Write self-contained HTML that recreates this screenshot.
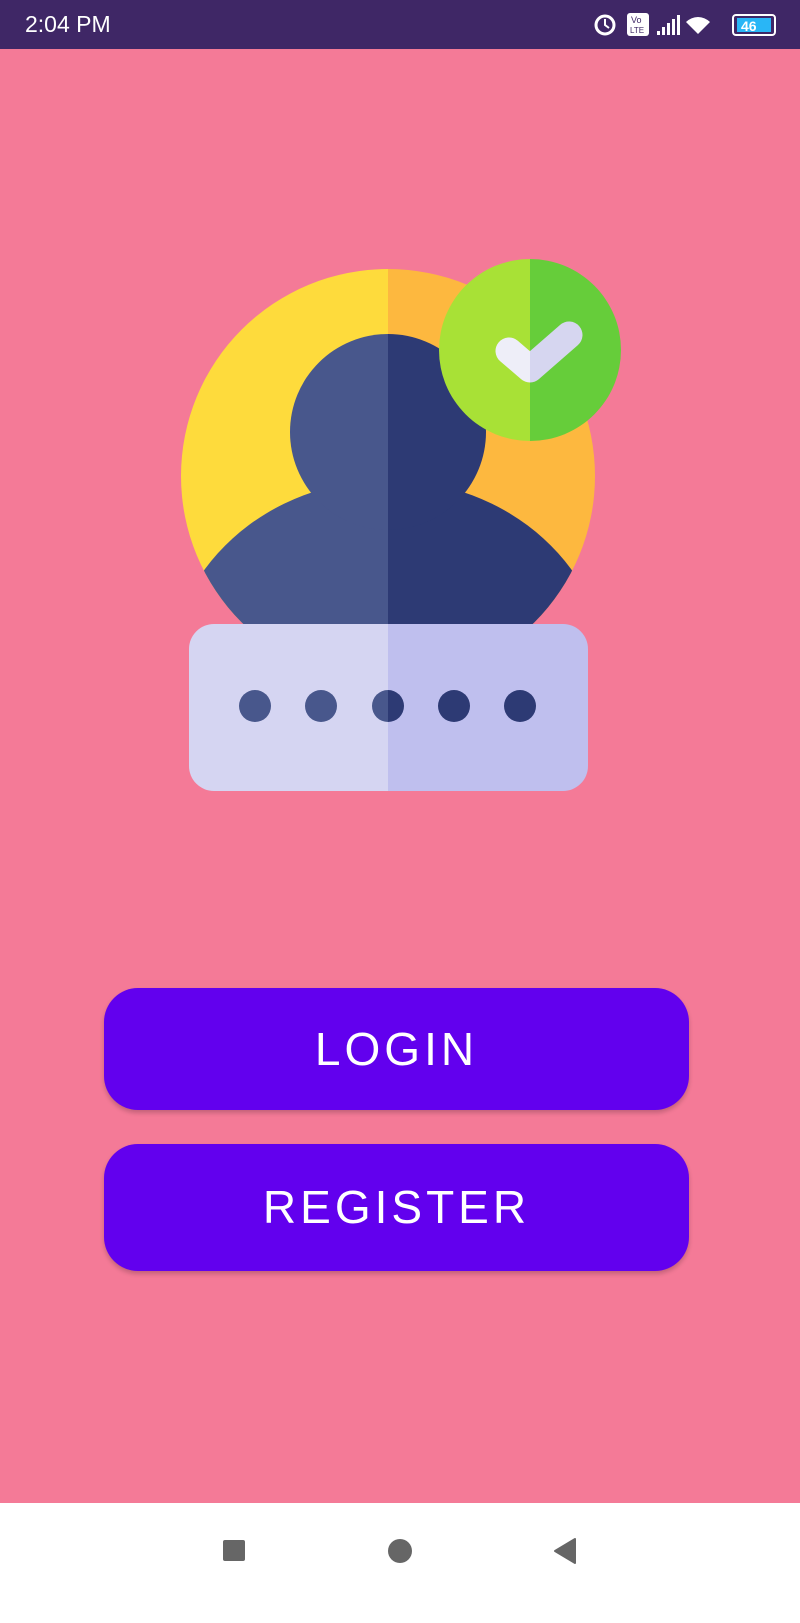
<!DOCTYPE html>
<html><head><meta charset="utf-8"><style>
html,body{margin:0;padding:0;}
body{width:800px;height:1600px;position:relative;background:#f47a97;overflow:hidden;font-family:"Liberation Sans",sans-serif;}
.sb{position:absolute;left:0;top:0;width:800px;height:49px;background:#3f2766;color:#fff;}
.sb .t{position:absolute;left:25px;top:11px;font-size:23px;}
.btn{position:absolute;left:104px;width:585px;background:#6200ee;border-radius:34px;color:#fff;text-align:center;font-size:46px;letter-spacing:4px;box-shadow:0 3px 5px rgba(0,0,0,0.2);}
.nav{position:absolute;left:0;top:1503px;width:800px;height:120px;background:#fff;}
</style></head><body>
<div class="sb"><span class="t">2:04 PM</span>
<svg width="800" height="49" style="position:absolute;left:0;top:0">
<circle cx="605" cy="25" r="9" fill="none" stroke="#fff" stroke-width="3"/><path d="M605 19v6l4 3" stroke="#fff" stroke-width="2" fill="none"/>
<rect x="627" y="13" width="22" height="23" rx="3" fill="#fff"/><text x="631" y="23" font-size="9" fill="#3f2766" font-family="Liberation Sans">Vo</text><text x="630" y="33" font-size="8" fill="#3f2766" font-family="Liberation Sans">LTE</text>
<path d="M657 35h3v-4h-3zM662 35h3v-8h-3zM667 35h3v-12h-3zM672 35h3v-16h-3zM677 35h3v-20h-3z" fill="#fff"/>
<path d="M698 34l-12-12a17 17 0 0 1 24 0z" fill="#fff"/>
<rect x="733" y="15" width="42" height="20" rx="3" fill="none" stroke="#fff" stroke-width="2"/><rect x="737" y="18" width="34" height="14" fill="#29b6f6"/><text x="741" y="31" font-size="14" font-weight="bold" fill="#fff" font-family="Liberation Sans">46</text>
</svg></div>

<svg width="800" height="1600" style="position:absolute;left:0;top:0">
<defs>
<clipPath id="big"><circle cx="388" cy="476" r="207"/></clipPath>
<clipPath id="L"><rect x="0" y="0" width="388" height="1600"/></clipPath>
<clipPath id="R"><rect x="388" y="0" width="412" height="1600"/></clipPath>
<clipPath id="GL"><rect x="0" y="0" width="530" height="1600"/></clipPath>
<clipPath id="GR"><rect x="530" y="0" width="270" height="1600"/></clipPath>
</defs>
<circle cx="388" cy="476" r="207" fill="#fedb3c" clip-path="url(#L)"/>
<circle cx="388" cy="476" r="207" fill="#fdb83f" clip-path="url(#R)"/>
<g clip-path="url(#big)">
<g clip-path="url(#L)"><ellipse cx="388" cy="680" rx="220" ry="200" fill="#48578c"/></g>
<g clip-path="url(#R)"><ellipse cx="388" cy="680" rx="220" ry="200" fill="#2d3a74"/></g>
</g>
<circle cx="388" cy="432" r="98" fill="#48578c" clip-path="url(#L)"/>
<circle cx="388" cy="432" r="98" fill="#2d3a74" clip-path="url(#R)"/>
<rect x="189" y="624" width="399" height="167" rx="25" fill="#d5d5f2" clip-path="url(#L)"/>
<rect x="189" y="624" width="399" height="167" rx="25" fill="#bfbfee" clip-path="url(#R)"/>
<circle cx="255" cy="706" r="16" fill="#48578c"/>
<circle cx="321" cy="706" r="16" fill="#48578c"/>
<circle cx="388" cy="706" r="16" fill="#48578c" clip-path="url(#L)"/>
<circle cx="388" cy="706" r="16" fill="#2d3a74" clip-path="url(#R)"/>
<circle cx="454" cy="706" r="16" fill="#2d3a74"/>
<circle cx="520" cy="706" r="16" fill="#2d3a74"/>
<circle cx="530" cy="350" r="91" fill="#a8e136" clip-path="url(#GL)"/>
<circle cx="530" cy="350" r="91" fill="#66cd3a" clip-path="url(#GR)"/>
<path d="M509 351 L530 369 L569 335" fill="none" stroke="#eeeef8" stroke-width="27" stroke-linecap="round" stroke-linejoin="round" clip-path="url(#GL)"/>
<path d="M509 351 L530 369 L569 335" fill="none" stroke="#d6d6f0" stroke-width="27" stroke-linecap="round" stroke-linejoin="round" clip-path="url(#GR)"/>
</svg>

<div class="btn" style="top:988px;height:122px;line-height:122px;">LOGIN</div>
<div class="btn" style="top:1144px;height:127px;line-height:127px;">REGISTER</div>

<div class="nav"><svg width="800" height="97">
<rect x="223" y="37" width="22" height="21" rx="2" fill="#666"/>
<circle cx="400" cy="48" r="12" fill="#666"/>
<path d="M575 36 L575 60 L555 48 Z" fill="#666" stroke="#666" stroke-width="2" stroke-linejoin="round"/>
</svg></div>
</body></html>
